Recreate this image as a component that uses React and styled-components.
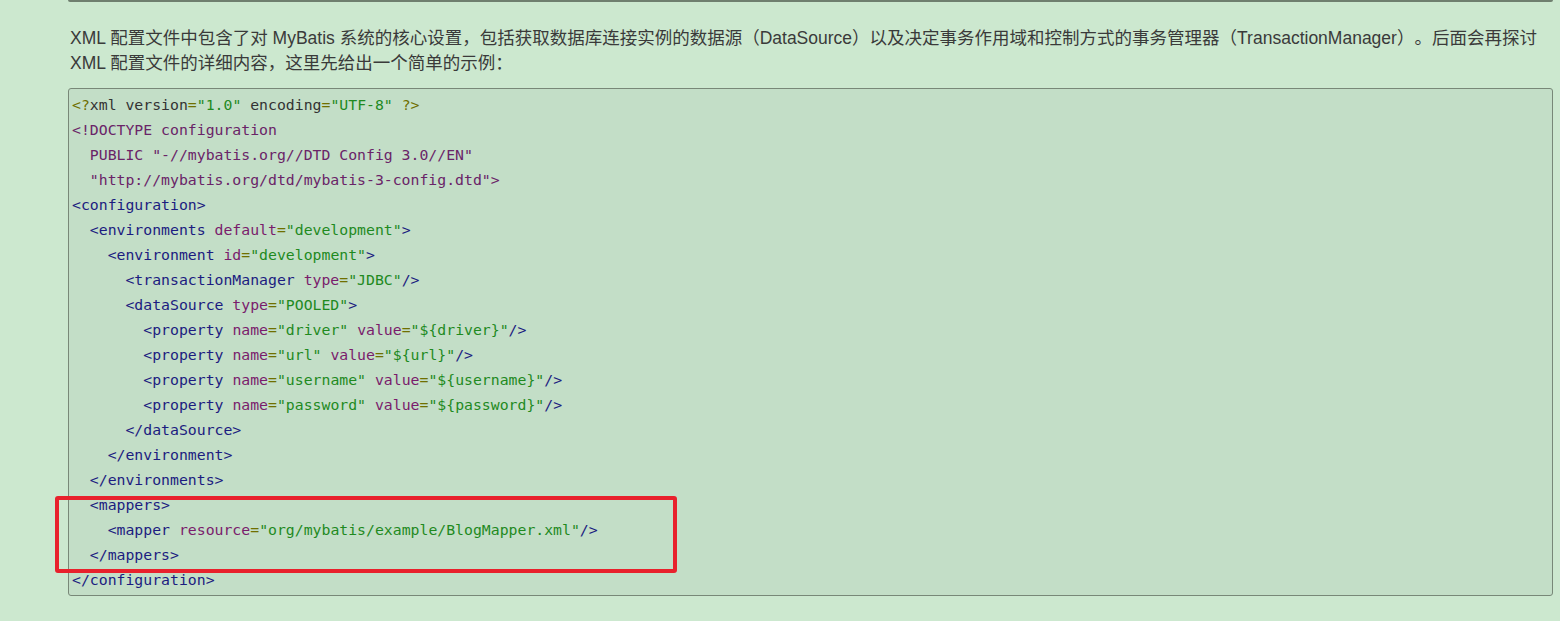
import React from 'react';
import styled, {createGlobalStyle} from 'styled-components';

const GlobalStyle = createGlobalStyle`
    html, body {
        margin: 0;
        padding: 0;
        background: #cce8cf;
    }
    body {
        height: 621px;
        overflow: hidden;
    }
`;

// each line: [indent, [[kind, text], ...]]
const codeLines = [
    [0, [['pi', '<?'], ['plain', 'xml version'], ['pi', '='], ['str', '"1.0"'], ['plain', ' encoding'], ['pi', '='], ['str', '"UTF-8"'], ['pi', ' ?>']]],
    [0, [['doc', '<!DOCTYPE configuration']]],
    [2, [['doc', 'PUBLIC "-//mybatis.org//DTD Config 3.0//EN"']]],
    [2, [['doc', '"http://mybatis.org/dtd/mybatis-3-config.dtd">']]],
    [0, [['tag', '<configuration>']]],
    [2, [['tag', '<environments '], ['attr', 'default'], ['pi', '='], ['str', '"development"'], ['tag', '>']]],
    [4, [['tag', '<environment '], ['attr', 'id'], ['pi', '='], ['str', '"development"'], ['tag', '>']]],
    [6, [['tag', '<transactionManager '], ['attr', 'type'], ['pi', '='], ['str', '"JDBC"'], ['tag', '/>']]],
    [6, [['tag', '<dataSource '], ['attr', 'type'], ['pi', '='], ['str', '"POOLED"'], ['tag', '>']]],
    [8, [['tag', '<property '], ['attr', 'name'], ['pi', '='], ['str', '"driver"'], ['attr', ' value'], ['pi', '='], ['str', '"${driver}"'], ['tag', '/>']]],
    [8, [['tag', '<property '], ['attr', 'name'], ['pi', '='], ['str', '"url"'], ['attr', ' value'], ['pi', '='], ['str', '"${url}"'], ['tag', '/>']]],
    [8, [['tag', '<property '], ['attr', 'name'], ['pi', '='], ['str', '"username"'], ['attr', ' value'], ['pi', '='], ['str', '"${username}"'], ['tag', '/>']]],
    [8, [['tag', '<property '], ['attr', 'name'], ['pi', '='], ['str', '"password"'], ['attr', ' value'], ['pi', '='], ['str', '"${password}"'], ['tag', '/>']]],
    [6, [['tag', '</dataSource>']]],
    [4, [['tag', '</environment>']]],
    [2, [['tag', '</environments>']]],
    [2, [['tag', '<mappers>']]],
    [4, [['tag', '<mapper '], ['attr', 'resource'], ['pi', '='], ['str', '"org/mybatis/example/BlogMapper.xml"'], ['tag', '/>']]],
    [2, [['tag', '</mappers>']]],
    [0, [['tag', '</configuration>']]],
];

const tokenColors = {
    pi: '#6f6f00',
    plain: '#333333',
    doc: '#6a2468',
    tag: '#1c1c80',
    attr: '#7a1c6c',
    str: '#1f8a1f',
};

function App() {
    return(
        <>
        <GlobalStyle />
        <Page>
            <PrevBlock />
            <Intro>
                XML 配置文件中包含了对 MyBatis 系统的核心设置，包括获取数据库连接实例的数据源（DataSource）以及决定事务作用域和控制方式的事务管理器（TransactionManager）。后面会再探讨 XML 配置文件的详细内容，这里先给出一个简单的示例：
            </Intro>
            <CodeWrap>
                <CodeBox>
                    {codeLines.map(([indent, tokens], i) => (
                        <CodeLine key={i}>
                            {' '.repeat(indent)}
                            {tokens.map(([kind, text], j) => (
                                <Token key={j} $kind={kind}>{text}</Token>
                            ))}
                        </CodeLine>
                    ))}
                </CodeBox>
                <Highlight />
            </CodeWrap>
        </Page>
        </>
    );
}

const Page = styled.div`
    width: 1485px;
    margin-left: 68px;
`;

const PrevBlock = styled.div`
    height: 0;
    border-bottom: 2px solid #6f7f6f;
    border-radius: 0 0 4px 4px;
`;

const Intro = styled.p`
    margin: 24px 0 0 0;
    padding-left: 2px;
    padding-right: 0;
    font-family: "Liberation Sans", "Noto Sans CJK SC", sans-serif;
    font-size: 17.5px;
    line-height: 25px;
    color: #3a3a3a;
    text-spacing-trim: space-all;
`;

const CodeWrap = styled.div`
    position: relative;
    margin-top: 12px;
`;

const CodeBox = styled.pre`
    margin: 0;
    padding: 3px 3px 3px 3px;
    border: 1px solid #788878;
    border-radius: 3px;
    background: #c3dec7;
    font-family: "DejaVu Sans Mono", "Liberation Mono", monospace;
    font-size: 14.8px;
    line-height: 25px;
    white-space: pre;
`;

const CodeLine = styled.div`
    height: 25px;
`;

const Token = styled.span`
    color: ${(p) => tokenColors[p.$kind]};
`;

const Highlight = styled.div`
    position: absolute;
    left: -13px;
    top: 408px;
    width: 614px;
    height: 69px;
    border: 4px solid #e8212c;
    border-radius: 3px;
    pointer-events: none;
`;

export default App;
